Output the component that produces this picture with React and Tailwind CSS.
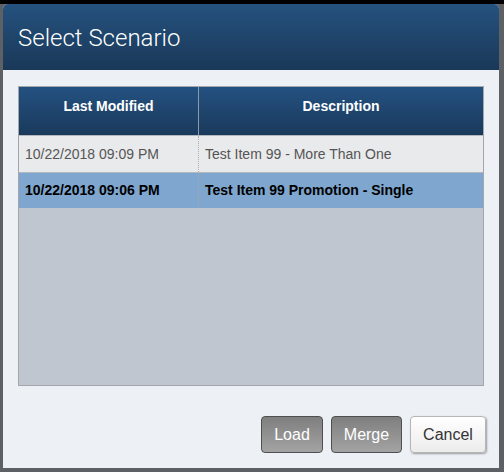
const rows = [
    { modified: "10/22/2018 09:09 PM", description: "Test Item 99 - More Than One", selected: false },
    { modified: "10/22/2018 09:06 PM", description: "Test Item 99 Promotion - Single", selected: true },
];

const App = () => {
    return (
        <div className="w-[504px] h-[472px] bg-[#5d6166] border-t-[4px] border-black pl-[3px] pr-[5px] pb-[4px] overflow-hidden" style={{ fontFamily: '"Liberation Sans", Arial, sans-serif' }}>
            <div className="h-full flex flex-col bg-[#edf0f4] rounded-t-[5px] overflow-hidden">
                {/* header */}
                <div className="h-[66px] shrink-0 flex items-center px-[15px] bg-gradient-to-b from-[#25527f] to-[#1a3858]">
                    <h1 className="text-white text-[24px] font-light pt-[1px]" style={{ fontFamily: 'Roboto, "Liberation Sans", sans-serif' }}>Select Scenario</h1>
                </div>

                <div className="flex-1 flex flex-col px-[15px] pt-[16px]">
                    <div className="h-[300px] flex flex-col border border-[#a3a6aa] bg-[#bfc6cf]">
                        <div className="flex h-[48px] bg-gradient-to-b from-[#245181] to-[#1a3a5c] text-white text-[14px] font-bold">
                            <div className="w-[180px] flex items-center justify-center border-r border-[#8c99a8] pb-[10px]">Last Modified</div>
                            <div className="flex-1 flex items-center justify-center pb-[10px]">Description</div>
                        </div>
                        {rows.map((row) => (
                            <div
                                key={row.modified}
                                className={row.selected
                                    ? "flex h-[36px] bg-[#7ea6cf] text-black font-bold text-[14px] border-t border-[#b4b8bd]"
                                    : "flex h-[37px] bg-[#e9eaec] text-[#555] text-[14px] border-t border-[#b4b8bd]"}
                            >
                                <div className={row.selected
                                    ? "w-[180px] flex items-center pl-[6px] border-r border-dotted border-[#a9a9a9]"
                                    : "w-[180px] flex items-center pl-[6px] border-r border-dotted border-[#b0b0b0]"}>{row.modified}</div>
                                <div className="flex-1 flex items-center pl-[6px]">{row.description}</div>
                            </div>
                        ))}
                    </div>

                    <div className="flex justify-end gap-[8px] mt-[30px] mr-[-2px]">
                        <button className="h-[37px] w-[62px] rounded-[4px] border border-[#4f4f4f] bg-gradient-to-b from-[#7f7f7f] to-[#a3a3a3] text-white text-[16px]">Load</button>
                        <button className="h-[37px] w-[71px] rounded-[4px] border border-[#4f4f4f] bg-gradient-to-b from-[#7f7f7f] to-[#a3a3a3] text-white text-[16px]">Merge</button>
                        <button className="h-[37px] w-[76px] rounded-[4px] border border-[#b5b5b5] bg-gradient-to-b from-white to-[#ececec] text-[#333] text-[16px] shadow-[1px_1px_2px_rgba(0,0,0,0.35)]">Cancel</button>
                    </div>
                </div>
            </div>
        </div>
    )
}

export default App
